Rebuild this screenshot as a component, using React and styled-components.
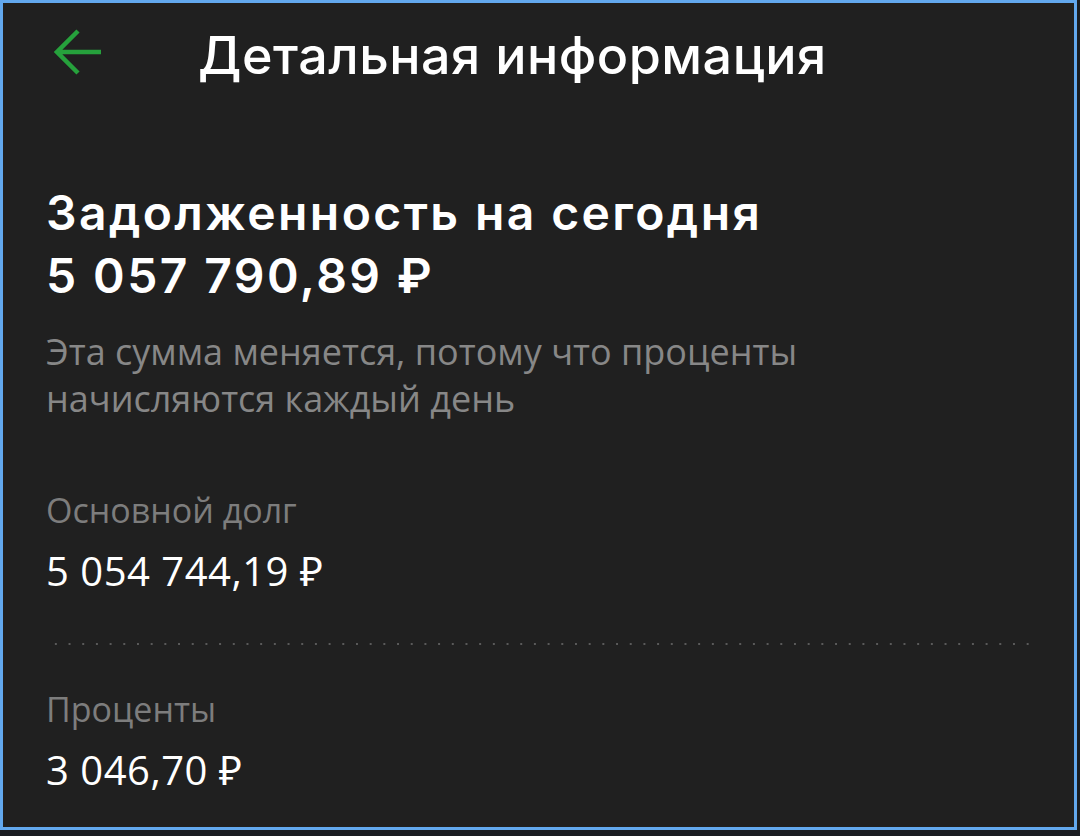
import React from 'react';
import styled, { createGlobalStyle } from 'styled-components';

const GlobalStyle = createGlobalStyle`
  html, body {
    margin: 0;
    padding: 0;
    background: #1a1d21;
  }
`;

const Frame = styled.div`
  box-sizing: border-box;
  width: 1077px;
  height: 830px;
  border: 3px solid #62a8ee;
  background: #202020;
  overflow: hidden;
  color: #ffffff;
  font-family: "Open Sans", "Noto Sans", sans-serif;
`;

const Toolbar = styled.header`
  display: flex;
  align-items: center;
  height: 100px;
  padding-left: 51px;
  margin-top: 2px;
`;

const BackButton = styled.button`
  display: flex;
  align-items: center;
  justify-content: center;
  width: 48px;
  height: 48px;
  padding: 0;
  margin-top: -6px;
  border: none;
  background: none;
  cursor: pointer;
`;

const ToolbarTitle = styled.h1`
  margin: 0 0 0 96px;
  font-family: Inter, "Noto Sans", sans-serif;
  font-size: 52px;
  font-weight: 500;
  letter-spacing: 0.5px;
`;

const Content = styled.main`
  padding: 76px 43px 0;
`;

const Heading = styled.h2`
  margin: 0;
  font-family: Inter, "Noto Sans", sans-serif;
  font-size: 48px;
  font-weight: 600;
  line-height: 63px;
  letter-spacing: 2.4px;
`;

const Hint = styled.p`
  margin: 21px 0 0;
  font-size: 36px;
  line-height: 47px;
  color: #878787;
`;

// first row sits under the hint, the next ones under a dotted divider
const Item = styled.section`
  padding: ${p => (p.$first ? '68px 0 48px' : '44px 0 46px')};
`;

const Label = styled.div`
  font-size: 34px;
  line-height: 40px;
  color: #7d7d7d;
`;

const Value = styled.div`
  margin-top: 17px;
  font-size: 40px;
  line-height: 48px;
  letter-spacing: 0.5px;
  color: #ffffff;
`;

const Divider = styled.hr`
  margin: 0 0 0 3px;
  width: 990px;
  height: 2px;
  border: none;
  background-image: radial-gradient(circle, #5a5a5a 0.9px, transparent 1.1px);
  background-size: 13.7px 2px;
`;

const ArrowLeft = () => (
  <svg width="48" height="48" viewBox="0 0 48 48" fill="none">
    <path
      d="M47 24H5M24 3L3 24l21 21"
      stroke="#26a13c"
      strokeWidth="4.5"
      strokeLinecap="butt"
      strokeLinejoin="miter"
    />
  </svg>
);

const rows = [
  { label: 'Основной долг', value: '5 054 744,19 ₽' },
  { label: 'Проценты', value: '3 046,70 ₽' },
];

export default function App() {
  return (
    <>
      <GlobalStyle />
      <Frame>
        <Toolbar>
          <BackButton aria-label="Назад">
            <ArrowLeft />
          </BackButton>
          <ToolbarTitle>Детальная информация</ToolbarTitle>
        </Toolbar>
        <Content>
          <Heading>
            Задолженность на сегодня
            <br />
            5 057 790,89 ₽
          </Heading>
          <Hint>
            Эта сумма меняется, потому что проценты
            <br />
            начисляются каждый день
          </Hint>
          {rows.map((row, i) => (
            <React.Fragment key={row.label}>
              {i > 0 && <Divider />}
              <Item $first={i === 0}>
                <Label>{row.label}</Label>
                <Value>{row.value}</Value>
              </Item>
            </React.Fragment>
          ))}
        </Content>
      </Frame>
    </>
  );
}
